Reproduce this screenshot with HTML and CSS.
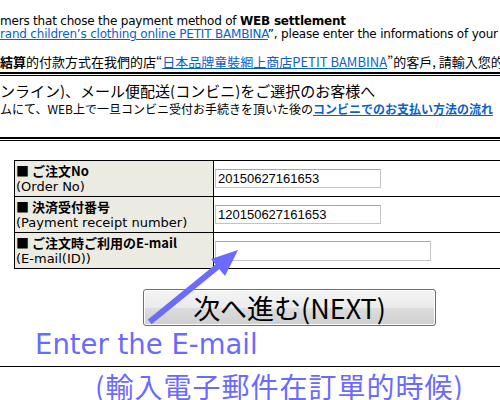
FILE: index.html
```html
<!DOCTYPE html>
<html lang="ja">
<head>
    <meta charset="UTF-8">
    <meta name="viewport" content="width=device-width, initial-scale=1.0">
    <title>コンビニ決済 お支払い手続き</title>
    <link rel="stylesheet" href="styles.css">
</head>
<body>
    <div class="page">
        <div class="intro">
            <div class="line en first">mers that chose the payment method of <b>WEB settlement</b></div>
            <div class="line en"><a href="#">rand children’s clothing online PETIT BAMBINA</a>”, please enter the informations of your order below</div>
            <div class="line zh"><b>結算</b>的付款方式在我們的店“<a href="#">日本品牌童裝網上商店PETIT BAMBINA</a>”的客戶, 請輸入您的訂單資料</div>
        </div>

        <div class="rule first-rule"></div>

        <div class="notice">
            <h2 class="line">ンライン)、メール便配送(コンビニ)をご選択のお客様へ</h2>
            <p class="line">ムにて、WEB上で一旦コンビニ受付お手続きを頂いた後の<a href="#"><b>コンビニでのお支払い方法の流れ</b></a></p>
        </div>

        <div class="rule"></div>

        <table class="form-table">
            <tr>
                <th><b>■ ご注文No</b><br>(Order No)</th>
                <td><input type="text" class="field" value="20150627161653"></td>
            </tr>
            <tr>
                <th><b>■ 決済受付番号</b><br>(Payment receipt number)</th>
                <td><input type="text" class="field" value="120150627161653"></td>
            </tr>
            <tr>
                <th><b>■ ご注文時ご利用のE-mail</b><br>(E-mail(ID))</th>
                <td><input type="text" class="field wide" value=""></td>
            </tr>
        </table>

        <button class="next-btn">次へ進む(NEXT)</button>

        <div class="hint-en">Enter the E-mail</div>
        <div class="hint-line"></div>
        <div class="hint-zh">(輸入電子郵件在訂單的時候)</div>

        <!-- 案内の矢印 -->
        <svg class="arrow" width="500" height="400" viewBox="0 0 500 400">
            <line x1="152" y1="320" x2="222" y2="263" stroke="#6b6bff" stroke-width="6" stroke-linecap="square"/>
            <polygon points="238,250 225,276 211,259" fill="#6b6bff"/>
        </svg>
    </div>
</body>
</html>
```

FILE: styles.css
```css
body {
    margin: 0;
    background: #fff;
    color: #000;
    font-family: "DejaVu Sans", "Noto Sans CJK JP", sans-serif;
    width: 500px;
    height: 400px;
    overflow: hidden;
}

.page {
    position: relative;
    width: 500px;
    height: 400px;
}

a {
    color: #0a5fcc;
}

.line {
    white-space: nowrap;
    overflow: hidden;
}

.en {
    font-size: 12px;
    line-height: 13px;
    letter-spacing: -0.2px;
}

.en.first {
    padding-top: 15px;
}

.zh {
    font-family: "Noto Sans CJK TC", sans-serif;
    font-size: 13px;
    line-height: 14px;
    margin-top: 14px;
}

/* 二重線 */
.rule {
    height: 1px;
    border-top: 2px solid #000;
    border-bottom: 1px solid #000;
    background: #fff;
}

.first-rule {
    margin-top: 3px;
}

.notice {
    padding: 7px 0 0;
    font-family: "Noto Sans CJK JP", sans-serif;
}

.notice h2 {
    margin: 0;
    font-size: 15px;
    font-weight: normal;
    line-height: 16px;
}

.notice p {
    margin: 3px 0 21px;
    font-size: 12px;
    line-height: 14px;
}

.form-table {
    margin: 19px 0 0 14px;
    width: 520px;
    border-collapse: collapse;
}

.form-table th,
.form-table td {
    border: 1px solid #000;
    height: 33px;
    padding: 0 1px;
}

.form-table th {
    width: 196px;
    background: #ecebe2;
    text-align: left;
    vertical-align: top;
    font-weight: normal;
    font-size: 13px;
    line-height: 15px;
    padding-top: 2px;
    white-space: nowrap;
}

.form-table th b {
    font-family: "Noto Sans CJK JP", sans-serif;
    font-weight: bold;
}

.field {
    display: block;
    box-sizing: border-box;
    width: 166px;
    height: 19px;
    margin: 0;
    padding: 0 2px;
    border: 1px solid #c4c4c4;
    border-top-color: #a8a8a8;
    font-family: "Liberation Sans", sans-serif;
    font-size: 13px;
    color: #000;
    background: #fff;
}

.field.wide {
    width: 216px;
    height: 20px;
}

.next-btn {
    display: block;
    margin: 20px 0 0 143px;
    width: 293px;
    height: 37px;
    padding: 0;
    border: 1px solid #707070;
    border-radius: 3px;
    background: linear-gradient(#f4f4f4 0%, #ebebeb 50%, #dddddd 51%, #cfcfcf 100%);
    box-shadow: inset 0 0 0 1px #fcfcfc;
    font-family: "Noto Sans CJK JP", sans-serif;
    font-size: 27px;
    line-height: 33px;
    color: #000;
}

.hint-en {
    margin: 2px 0 0 35px;
    font-family: "DejaVu Sans", sans-serif;
    font-size: 27.5px;
    line-height: 32px;
    color: #6a6aff;
}

.hint-line {
    margin-top: 6px;
    border-top: 1px solid #000;
}

.hint-zh {
    margin: 3px 0 0 95px;
    font-family: "Noto Sans CJK TC", sans-serif;
    font-size: 28px;
    line-height: 32px;
    letter-spacing: 1px;
    color: #6a6aff;
}

.arrow {
    position: absolute;
    top: 0;
    left: 0;
    pointer-events: none;
}
```
